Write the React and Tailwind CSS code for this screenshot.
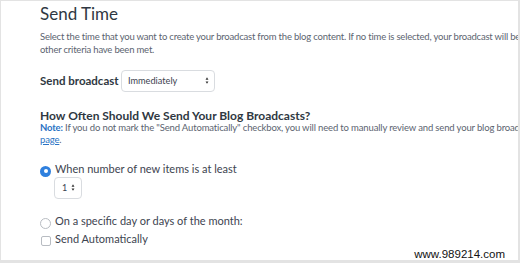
import React from 'react';

const font = { fontFamily: 'Lato, "Noto Sans", sans-serif' };

function Arrows({ className }) {
  return (
    <svg viewBox="0 0 6 12" className={className} fill="currentColor">
      <path d="M3 0.5 L5.5 4.5 L0.5 4.5 Z" />
      <path d="M3 11.5 L5.5 7.5 L0.5 7.5 Z" />
    </svg>
  );
}

function Select({ value, className, textClass }) {
  return (
    <div
      className={
        'flex items-center justify-between rounded-[4px] border border-[#d9dce0] bg-white text-[#3d4450] ' +
        className
      }
    >
      <span className={textClass}>{value}</span>
      <Arrows className="h-[7px] w-[4px] text-[#333]" />
    </div>
  );
}

export default function App() {
  return (
    <div className="h-[263px] w-[520px] overflow-hidden bg-white" style={font}>
      <div className="relative h-[263px] w-[520px] overflow-hidden border-t border-l border-r-2 border-b-[3px] border-[#e3e3e3] pl-[39px] pt-[3px]">
        <h1 className="text-[17px] leading-[20px] font-normal text-[#2f3842]">Send Time</h1>
        <p className="mt-[6px] whitespace-nowrap text-[9.5px] leading-[13.3px] tracking-[-0.2px] text-[#5c6470]">
          Select the time that you want to create your broadcast from the blog content. If no time is selected, your broadcast will be created as soon as all
          <br />
          other criteria have been met.
        </p>

        <div className="mt-[13px] flex items-center">
          <span className="w-[81px] text-[11.5px] leading-[14px] font-bold text-[#2f3842]">Send broadcast</span>
          <Select
            value="Immediately"
            className="h-[22px] w-[94px] pl-[6px] pr-[5px]"
            textClass="text-[9.2px]"
          />
        </div>

        <h2 className="mt-[17px] whitespace-nowrap text-[12px] leading-[13px] font-bold text-[#2f3842]">
          How Often Should We Send Your Blog Broadcasts?
        </h2>
        <p className="whitespace-nowrap text-[9.5px] leading-[12px] tracking-[-0.15px] text-[#5c6470]">
          <span className="font-bold text-[#2b73c4]">Note:</span> If you do not mark the "Send Automatically" checkbox, you will need to manually review and send your blog broadcasts from the Pending Broadcasts
          <br />
          <a className="text-[#2b73c4] underline">page</a>.
        </p>

        <div className="mt-[16px] flex items-start gap-[4px]">
          <span className="mt-[4px] grid h-[11px] w-[11px] place-items-center rounded-full bg-[#2f80de]">
            <span className="h-[4px] w-[4px] rounded-full bg-white" />
          </span>
          <span className="text-[11px] leading-[14px] text-[#3d4450]">When number of new items is at least</span>
        </div>
        <div className="pl-[14px]">
          <Select value="1" className="h-[22px] w-[28px] pl-[7px] pr-[6px]" textClass="text-[9px]" />
        </div>

        <div className="mt-[15px] flex items-start gap-[4px]">
          <span className="mt-[4px] h-[11px] w-[11px] rounded-full border border-[#b8bcc2] bg-white" />
          <span className="text-[11px] leading-[14px] text-[#3d4450]">On a specific day or days of the month:</span>
        </div>
        <div className="mt-[3px] flex items-start gap-[4px] pl-[1px]">
          <span className="mt-[4px] h-[10px] w-[10px] rounded-[2px] border border-[#b8bcc2] bg-white" />
          <span className="text-[11px] leading-[14px] text-[#3d4450]">Send Automatically</span>
        </div>

        <span
          className="absolute right-[13px] bottom-0 text-[11.5px] leading-none text-[#111]"
          style={{ fontFamily: '"Liberation Sans", Arial, sans-serif' }}
        >
          www.989214.com
        </span>
      </div>
    </div>
  );
}
